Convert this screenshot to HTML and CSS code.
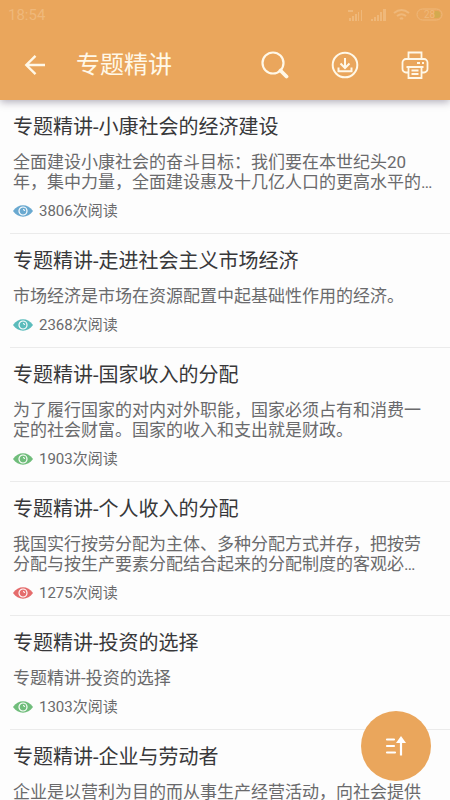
FILE: index.html
```html
<!DOCTYPE html>
<html lang="zh-CN">
<head>
<meta charset="utf-8">
<meta name="viewport" content="width=device-width, initial-scale=1">
<title>专题精讲</title>
<link rel="stylesheet" href="styles.css">
</head>
<body>
<svg class="defs" aria-hidden="true">
  <symbol id="eye" viewBox="0 0 20 12">
    <path d="M0 6C5-1.6 15-1.6 20 6 15 13.6 5 13.6 0 6Z" fill="currentColor"/>
    <circle cx="10" cy="6" r="4" fill="none" stroke="#fff" stroke-width="1.2"/>
    <path d="M10 4.500A1.500 1.500 0 0 1 11.500 6" fill="none" stroke="#fff" stroke-width="1.100"/>
  </symbol>
</svg>
<div class="app">
  <header class="header">
    <div class="status">
      <span>18:54</span>
      <div class="status-icons">
        <svg width="17" height="14" viewBox="0 0 17 14" fill="currentColor"><path d="M1 2h5v2H1zM2 10h2v3H2zM5 8h2v5H5zM8 6h2v7H8zM11 4h1v9h-1zM14 2h1v11h-1z"/></svg>
        <svg width="17" height="14" viewBox="0 0 17 14" fill="currentColor"><path d="M1 11h2v2H1zM4 9h2v4H4zM7 7h2v6H7zM10 4h2v9h-2zM13 1h3v12h-3z"/></svg>
        <svg width="17" height="14" viewBox="0 0 17 14" fill="none" stroke="currentColor" stroke-width="2"><path d="M1 5Q8.500-1 16 5M4 8q4.500-3.500 9 0M7 11q1.500-1.200 3 0"/></svg>
        <svg width="28" height="14" viewBox="0 0 28 14"><rect x="1" y="1" width="25" height="11" rx="5.500" fill="none" stroke="currentColor"/><path d="M18 3h3a3.500 3.500 0 0 1 0 7h-3z" fill="#d3aa50"/><text x="8" y="10" font-size="10" fill="currentColor">28</text></svg>
      </div>
    </div>
    <div class="toolbar">
      <button class="icon-button" type="button" aria-label="返回">
        <svg width="22" height="22" viewBox="0 0 22 22" fill="none" stroke="currentColor" stroke-width="2.400"><path d="M21 11H2.500M11.500 1.800 2.300 11l9.200 9.200"/></svg>
      </button>
      <h1 class="title">专题精讲</h1>
      <div class="actions">
        <button class="icon-button" type="button" aria-label="搜索">
          <svg width="28" height="28" viewBox="0 0 28 28" fill="none" stroke="currentColor"><circle cx="12" cy="12" r="10.500" stroke-width="2.200"/><path d="m19.500 19.500 6 6" stroke-width="3.800" stroke-linecap="round"/></svg>
        </button>
        <button class="icon-button" type="button" aria-label="下载">
          <svg width="28" height="28" viewBox="0 0 28 28" fill="none" stroke="currentColor" stroke-width="2"><circle cx="14" cy="14" r="12.300"/><path d="M14 7v9.500M9.500 12.500 14 17l4.500-4.500M7.500 16.500v3.700h13v-3.700"/></svg>
        </button>
        <button class="icon-button" type="button" aria-label="打印">
          <svg width="28" height="28" viewBox="0 0 28 28" fill="none" stroke="currentColor" stroke-width="1.800"><path d="M7.500 8V1.500h13V8M7.500 21.500H5a3.500 3.500 0 0 1-3.500-3.500v-6.500A3.500 3.500 0 0 1 5 8h18a3.500 3.500 0 0 1 3.500 3.500V18a3.500 3.500 0 0 1-3.500 3.500h-2.500M5.500 16h17M7.500 16v11h13V16M10.500 19.500h7M10.500 23h7M16 12h3M21 12h2"/></svg>
        </button>
      </div>
    </div>
  </header>

  <main class="list">
    <article class="item">
      <h2 class="item-title">专题精讲-小康社会的经济建设</h2>
      <p class="summary">全面建设小康社会的奋斗目标：我们要在本世纪头20年，集中力量，全面建设惠及十几亿人口的更高水平的…</p>
      <div class="reads"><svg class="eye blue"><use href="#eye"/></svg>3806次阅读</div>
    </article>
    <article class="item">
      <h2 class="item-title">专题精讲-走进社会主义市场经济</h2>
      <p class="summary">市场经济是市场在资源配置中起基础性作用的经济。</p>
      <div class="reads"><svg class="eye teal"><use href="#eye"/></svg>2368次阅读</div>
    </article>
    <article class="item">
      <h2 class="item-title">专题精讲-国家收入的分配</h2>
      <p class="summary">为了履行国家的对内对外职能，国家必须占有和消费一定的社会财富。国家的收入和支出就是财政。</p>
      <div class="reads"><svg class="eye green"><use href="#eye"/></svg>1903次阅读</div>
    </article>
    <article class="item">
      <h2 class="item-title">专题精讲-个人收入的分配</h2>
      <p class="summary">我国实行按劳分配为主体、多种分配方式并存，把按劳分配与按生产要素分配结合起来的分配制度的客观必…</p>
      <div class="reads"><svg class="eye red"><use href="#eye"/></svg>1275次阅读</div>
    </article>
    <article class="item">
      <h2 class="item-title">专题精讲-投资的选择</h2>
      <p class="summary">专题精讲-投资的选择</p>
      <div class="reads"><svg class="eye green"><use href="#eye"/></svg>1303次阅读</div>
    </article>
    <article class="item">
      <h2 class="item-title">专题精讲-企业与劳动者</h2>
      <p class="summary">企业是以营利为目的而从事生产经营活动，向社会提供</p>
    </article>
  </main>

  <button class="fab" type="button" aria-label="排序">
    <svg width="22" height="20" viewBox="0 0 22 20" fill="none" stroke="currentColor" stroke-width="2.200"><path d="M2 3.500h7M2 10h7M2 16.500h8" stroke-linecap="round"/><path d="M16 19.500V5"/><path d="M16 0l5 7H11z" fill="currentColor" stroke="none"/></svg>
  </button>
</div>
</body>
</html>
```
FILE: styles.css
```css
* {
  box-sizing: border-box;
}

body {
  margin: 0;
  background: #fdfdfd;
  color: #38383a;
  font-family: Roboto, "Noto Sans CJK SC", sans-serif;
}

button {
  padding: 0;
  border: 0;
  background: none;
  color: inherit;
}

h1,
h2,
p {
  margin: 0;
  font-weight: 400;
}

svg {
  display: block;
}

.defs {
  position: absolute;
  width: 0;
  height: 0;
}

.app {
  display: flex;
  flex-direction: column;
  height: 100vh;
  overflow: hidden;
}

.header {
  flex: none;
  z-index: 1;
  background: #eaa65c;
  color: #fff8e8;
  box-shadow: 0 2px 8px rgba(60, 50, 80, 0.4);
}

.status {
  display: flex;
  align-items: center;
  justify-content: space-between;
  height: 30px;
  padding: 0 6px 0 8px;
  color: #efb87a;
  font-size: 15px;
}

.status-icons {
  display: flex;
  gap: 6px;
}

.toolbar {
  display: flex;
  align-items: center;
  height: 70px;
  padding: 0 21px 0 24px;
}

.icon-button {
  display: flex;
  align-items: center;
  justify-content: center;
}

.title {
  flex: 1;
  margin-left: 30px;
  font-size: 24px;
  line-height: 32px;
}

.actions {
  display: flex;
  gap: 42px;
}

.list {
  flex: 1;
  min-height: 0;
  overflow: hidden;
}

.item {
  margin-left: 10px;
  padding: 13px 13px 12px 3px;
  border-bottom: 1px solid #ebebeb;
}

.item-title {
  font-size: 20px;
  line-height: 28px;
}

.summary {
  margin-top: 11px;
  color: #6a6a6c;
  font-size: 17px;
  line-height: 20px;
}

.reads {
  display: flex;
  align-items: center;
  gap: 6px;
  margin-top: 9px;
  color: #6a6a6c;
  font-size: 15px;
  line-height: 20px;
}

.eye {
  width: 20px;
  height: 12px;
}

.blue {
  color: #6aa9d0;
}

.teal {
  color: #5bbcbc;
}

.green {
  color: #70bd7b;
}

.red {
  color: #e56c6c;
}

.fab {
  position: fixed;
  right: 19px;
  bottom: 19px;
  z-index: 2;
  display: flex;
  align-items: center;
  justify-content: center;
  width: 70px;
  height: 70px;
  border-radius: 50%;
  background: #eaa65c;
  color: #fff;
}
```
